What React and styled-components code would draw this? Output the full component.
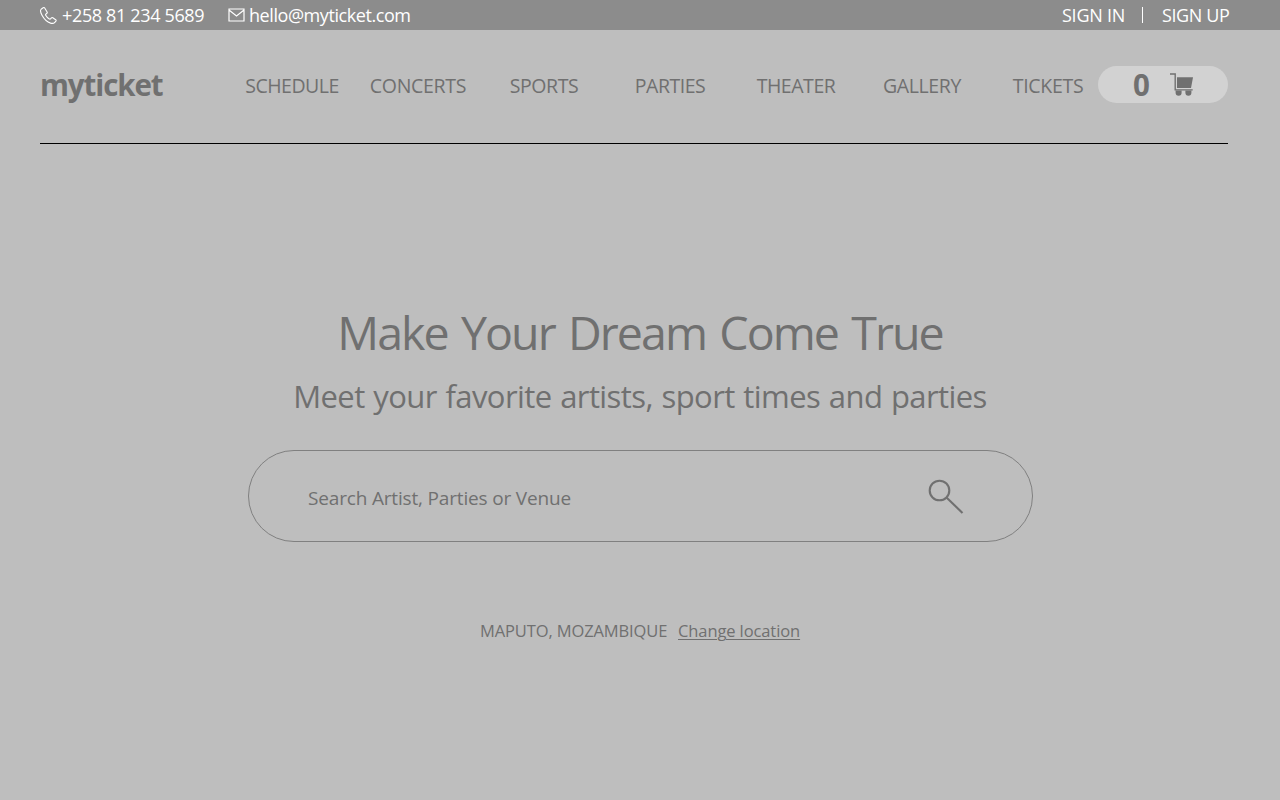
import React from "react";
import styled, { createGlobalStyle } from "styled-components";

const GlobalStyle = createGlobalStyle`
  * { box-sizing: border-box; }
  body {
    margin: 0;
    background: #bebebe;
    color: #707070;
    font-family: "Segoe UI", "Open Sans", "Noto Sans", sans-serif;
  }
  a { color: inherit; text-decoration: none; }
`;

const Page = styled.div`
  width: 1280px;
  height: 800px;
  overflow: hidden;
`;

const TopBar = styled.div`
  display: flex;
  align-items: center;
  height: 30px;
  padding: 0 50px 0 40px;
  background: #8c8c8c;
  color: #fff;
`;

const Contact = styled.a`
  display: flex;
  align-items: center;
  width: ${(p) => p.$width}px;
  gap: ${(p) => p.$gap}px;
`;

const Label = styled.span`
  font-size: ${(p) => p.$size}px;
  line-height: 24px;
  letter-spacing: ${(p) => p.$track || 0}px;
  white-space: nowrap;
`;

const Account = styled.div`
  display: flex;
  align-items: center;
  margin-left: auto;
  width: 168px;
`;

const AccountLink = styled.a`
  width: ${(p) => p.$width}px;
`;

const Divider = styled.span`
  width: 1px;
  height: 16px;
  margin-right: 19px;
  background: #fff;
`;

const Header = styled.header`
  display: flex;
  height: 114px;
  margin: 0 52px 0 40px;
  padding-top: 36px;
  border-bottom: 1px solid #000;
`;

const Logo = styled.a`
  width: 189px;
  font-size: 29.5px;
  font-weight: 700;
  line-height: 38px;
  letter-spacing: -1.1px;
`;

const Nav = styled.nav`
  display: grid;
  grid-template-columns: repeat(7, 126px);
  margin-right: -13px;
  height: 40px;
  align-items: center;
  justify-items: center;
`;

const Cart = styled.a`
  display: flex;
  align-items: center;
  width: 130px;
  height: 37px;
  padding-left: 35px;
  border-radius: 19px;
  background: #d2d2d2;
`;

const Count = styled.span`
  width: 37px;
  font-size: 29.5px;
  font-weight: 700;
  line-height: 37px;
`;

const Hero = styled.main`
  display: flex;
  flex-direction: column;
  align-items: center;
  padding-top: 156px;
`;

const Title = styled.h1`
  margin: 0;
  font-size: 46.5px;
  font-weight: 400;
  line-height: 64px;
  letter-spacing: -1.95px;
  word-spacing: 3.2px;
  white-space: nowrap;
`;

const Subtitle = styled.h2`
  margin: 10px 0 0;
  font-size: 31px;
  font-weight: 400;
  line-height: 44px;
  letter-spacing: -0.58px;
  word-spacing: 1.15px;
  white-space: nowrap;
`;

const Search = styled.div`
  display: flex;
  align-items: center;
  justify-content: space-between;
  width: 785px;
  height: 92px;
  margin: 32px 0 0 1px;
  padding: 3px 68px 0 59px;
  border: 1px solid #808080;
  border-radius: 46px;
`;

const Location = styled.div`
  display: flex;
  width: 320px;
  margin-top: 77px;
`;

const City = styled.span`
  flex: none;
  width: 198px;
`;

const Change = styled.a`
  text-decoration: underline;
  text-underline-offset: 2px;
  text-decoration-thickness: 1px;
`;

const Icon = styled.svg`
  display: block;
  flex: none;
`;

const SearchGlyph = styled(Icon)`
  margin-bottom: 2px;
`;

const PhoneIcon = () => (
  <Icon width="17" height="17" viewBox="0 0 17 17" fill="none" stroke="#fff" strokeWidth="1.1" strokeLinejoin="round">
    <path d="M3.2 .8 1.1 2.3C.1 3.2.5 5.4 2 8.3 4 12 7 15 10.6 16.1c1.8.5 3.3.2 4.2-.8l1.1-1.2c.4-.5.3-1-.2-1.4l-2.9-2c-.5-.3-1-.2-1.4.2l-.8.9c-.4.4-.8.4-1.3.1-1.5-.8-2.7-2.1-3.6-3.7-.3-.5-.2-.9.3-1.2l.9-.7c.4-.3.5-.8.2-1.3L4.7 1C4.3.5 3.8.4 3.2.8Z" />
  </Icon>
);

const MailIcon = () => (
  <Icon width="17" height="14" viewBox="0 0 17 14" fill="none" stroke="#fff" strokeWidth="1.2">
    <path d="M1 1h15v12H1zM1 2l7.5 6L16 2" />
  </Icon>
);

const CartIcon = () => (
  <Icon width="24" height="24" viewBox="0 0 24 24">
    <path d="M0 1H5.2V16.9H22.7" fill="none" stroke="#707070" strokeWidth="1.4" />
    <path d="M7 4.3H23L21 15H7Z" fill="#707070" />
    <path d="M5.6 17.5H11.6V19.7A3 3 0 0 1 5.6 19.7ZM15.4 17.5H21.4V19.7A3 3 0 0 1 15.4 19.7Z" fill="#707070" />
  </Icon>
);

const SearchIcon = () => (
  <SearchGlyph width="36" height="36" viewBox="0 0 36 36" fill="none" stroke="#707070" strokeWidth="2.1">
    <circle cx="11.5" cy="11.5" r="9.8" />
    <path d="M18.5 18.5 34.5 34" />
  </SearchGlyph>
);

const links = [
  ["SCHEDULE", -0.5],
  ["CONCERTS", -0.3],
  ["SPORTS", -0.45],
  ["PARTIES", -0.5],
  ["THEATER", -0.45],
  ["GALLERY", -0.4],
  ["TICKETS", -0.3],
];

export default function App() {
  return (
    <Page>
      <GlobalStyle />
      <TopBar>
        <Contact $width={188} $gap={5}>
          <PhoneIcon />
          <Label $size={18} $track={-0.35}>+258 81 234 5689</Label>
        </Contact>
        <Contact $width={190} $gap={4}>
          <MailIcon />
          <Label $size={18} $track={-0.43}>hello@myticket.com</Label>
        </Contact>
        <Account>
          <AccountLink $width={80}><Label $size={18} $track={-0.25}>SIGN IN</Label></AccountLink>
          <Divider />
          <AccountLink $width={68}><Label $size={18} $track={-0.4}>SIGN UP</Label></AccountLink>
        </Account>
      </TopBar>
      <Header>
        <Logo>myticket</Logo>
        <Nav>
          {links.map(([name, track]) => (
            <Label as="a" key={name} $size={19.5} $track={track}>{name}</Label>
          ))}
        </Nav>
        <Cart>
          <Count>0</Count>
          <CartIcon />
        </Cart>
      </Header>
      <Hero>
        <Title>Make Your Dream Come True</Title>
        <Subtitle>Meet your favorite artists, sport times and parties</Subtitle>
        <Search>
          <Label $size={19} $track={-0.17}>Search Artist, Parties or Venue</Label>
          <SearchIcon />
        </Search>
        <Location>
          <City><Label $size={16.5} $track={-0.12}>MAPUTO, MOZAMBIQUE</Label></City>
          <Change><Label $size={16.5} $track={-0.1}>Change location</Label></Change>
        </Location>
      </Hero>
    </Page>
  );
}
